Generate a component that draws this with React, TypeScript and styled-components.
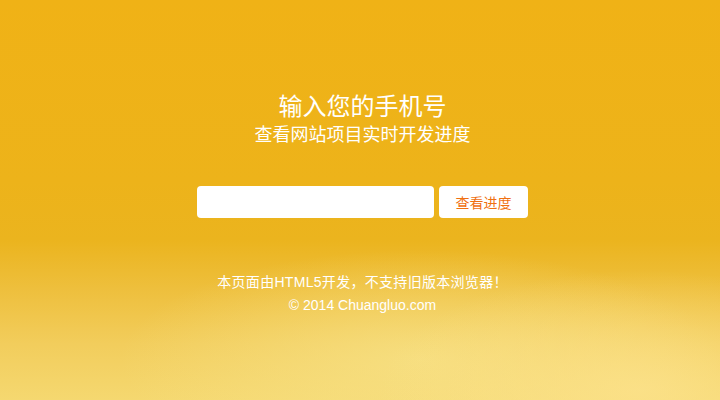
import React from 'react';
import styled, { createGlobalStyle } from 'styled-components';

const GlobalStyle = createGlobalStyle`
  html, body {
    margin: 0;
    padding: 0;
    height: 100%;
  }
  body {
    font-family: "Liberation Sans", "Noto Sans CJK SC", sans-serif;
  }
`;

const Page = styled.div`
  width: 720px;
  height: 400px;
  box-sizing: border-box;
  padding: 90px 0 0 5px;
  display: flex;
  flex-direction: column;
  align-items: center;
  color: #fff;
  background:
    radial-gradient(ellipse 260px 120px at 640px 390px, rgba(252, 226, 140, 0.8), rgba(252, 226, 140, 0) 100%),
    radial-gradient(ellipse 300px 110px at 420px 360px, rgba(248, 228, 140, 0.7), rgba(248, 228, 140, 0) 100%),
    linear-gradient(to bottom, #f0b216 0%, #edb31a 45%, #ebb41e 60%, #eebf3c 72%, #f2cd5c 86%, #f5d870 100%);
`;

const Title = styled.h1`
  margin: 0;
  font-family: "Noto Sans CJK SC", sans-serif;
  font-size: 24px;
  font-weight: 400;
  line-height: 30px;
`;

const Subtitle = styled.h2`
  margin: 0;
  font-family: "Noto Sans CJK SC", sans-serif;
  font-size: 18px;
  font-weight: 400;
  line-height: 26px;
`;

const SearchForm = styled.form`
  display: flex;
  gap: 5px;
  margin-top: 40px;
`;

const PhoneInput = styled.input`
  width: 237px;
  height: 32px;
  box-sizing: border-box;
  border: none;
  border-radius: 4px;
  background: #fff;
  padding: 0 10px;
  font-size: 14px;
  outline: none;
`;

const SubmitButton = styled.button`
  width: 89px;
  height: 32px;
  border: none;
  border-radius: 4px;
  background: #fff;
  color: #f07010;
  font-family: "Noto Sans CJK SC", sans-serif;
  font-size: 14px;
  cursor: pointer;
`;

const Footer = styled.div`
  margin-top: 55px;
  display: flex;
  flex-direction: column;
  align-items: center;
  gap: 5px;
  font-size: 14px;
  line-height: 18px;
`;

const FooterLine = styled.p<{ $spaced?: boolean }>`
  margin: 0;
  font-family: "Liberation Sans", "Noto Sans CJK SC", sans-serif;
  letter-spacing: ${(p) => (p.$spaced ? '0.3px' : '0')};
`;

function App() {
  const [phone, setPhone] = React.useState<string>('');

  const handleSubmit = (e: React.FormEvent<HTMLFormElement>) => {
    e.preventDefault();
  };

  return (
    <>
      <GlobalStyle />
      <Page>
        <Title>输入您的手机号</Title>
        <Subtitle>查看网站项目实时开发进度</Subtitle>
        <SearchForm onSubmit={handleSubmit}>
          <PhoneInput value={phone} onChange={(e) => setPhone(e.target.value)} />
          <SubmitButton type="submit">查看进度</SubmitButton>
        </SearchForm>
        <Footer>
          <FooterLine $spaced>本页面由HTML5开发，不支持旧版本浏览器！</FooterLine>
          <FooterLine>© 2014 Chuangluo.com</FooterLine>
        </Footer>
      </Page>
    </>
  );
}

export default App;
